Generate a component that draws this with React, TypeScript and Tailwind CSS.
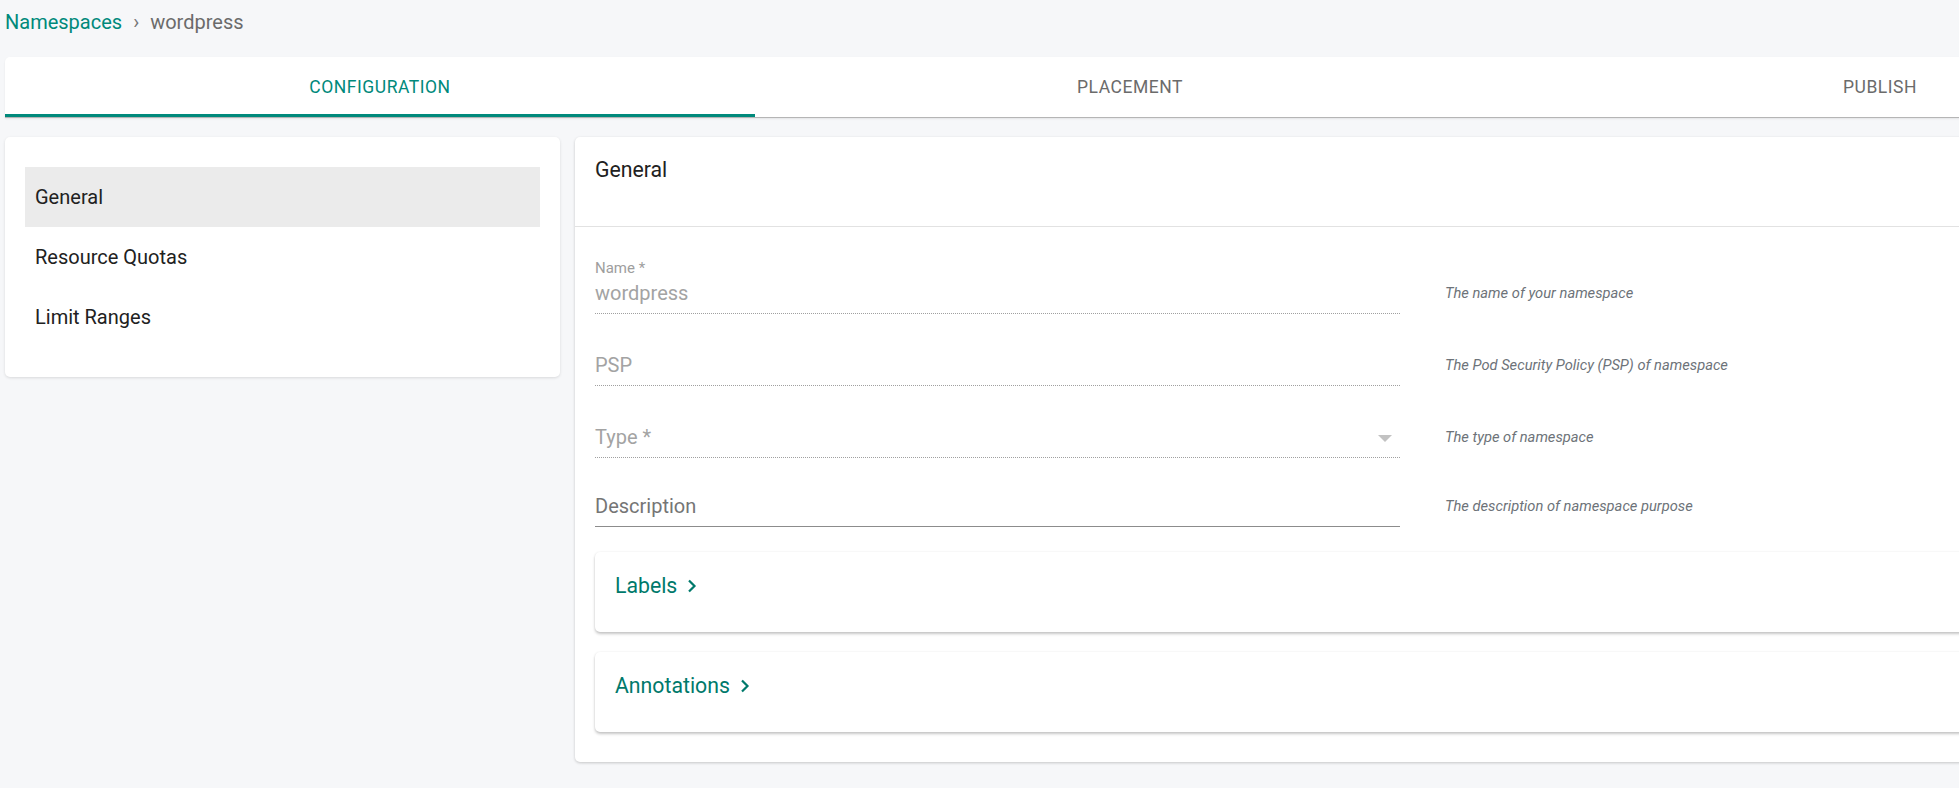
import React from 'react';

type Field = {
  label: string;
  value?: string;
  help: string;
  disabled: boolean;
  select?: boolean;
  gap: string;
};

const fields: Field[] = [
  { label: 'Name *', value: 'wordpress', help: 'The name of your namespace', disabled: true, gap: 'mt-[32px]' },
  { label: 'PSP', help: 'The Pod Security Policy (PSP) of namespace', disabled: true, gap: 'mt-[17px]' },
  { label: 'Type *', help: 'The type of namespace', disabled: true, select: true, gap: 'mt-[16.5px]' },
  { label: 'Description', help: 'The description of namespace purpose', disabled: false, gap: 'mt-[14.5px]' },
];

const menu = ['General', 'Resource Quotas', 'Limit Ranges'];

const tabs = ['Configuration', 'Placement', 'Publish'];

function FieldRow({ field }: { field: Field }) {
  const hasValue = !!field.value;
  return (
    <div className={`flex ${field.gap}`}>
      <div className="w-[805px] flex flex-col">
        <div className="h-[18px] text-[15px] leading-[18px] text-[#9e9e9e]">
          {hasValue ? field.label : ''}
        </div>
        <div className="mt-[4px] h-[24px] flex items-center justify-between">
          <span
            className={`text-[20px] leading-[24px] ${
              field.disabled ? 'text-[#a3a3a3]' : 'text-[#757575]'
            }`}
          >
            {hasValue ? field.value : field.label}
          </span>
          {field.select && (
            <svg width="14" height="8" viewBox="0 0 14 8" className="mr-[8px] mt-[4px]">
              <polygon points="0,0 14,0 7,7" fill="#c2c2c2" />
            </svg>
          )}
        </div>
        <div
          className={`mt-[8px] ${
            field.disabled
              ? 'border-b border-dotted border-[#a0a0a0]'
              : 'border-b-[1.5px] border-solid border-[#8c8c8c]'
          }`}
        />
      </div>
      <div className="ml-[45px] pt-[25px] text-[14.7px] leading-[18px] italic text-[#6d7379]">
        {field.help}
      </div>
    </div>
  );
}

function Expander({ title, className }: { title: string; className?: string }) {
  return (
    <div
      className={`h-[80px] rounded-[5px] bg-white px-5 pt-[22px] shadow-[0_2px_3px_rgba(0,0,0,0.22),0_0_2px_rgba(0,0,0,0.08)] ${className ?? ''}`}
    >
      <div className="flex items-center gap-[10px] text-[21.25px] leading-[24px] text-[#00796b]">
        <span>{title}</span>
        <svg width="10" height="14" viewBox="0 0 10 14" fill="none">
          <path d="M2 1.5 7.5 7 2 12.5" stroke="#00796b" strokeWidth="2.2" />
        </svg>
      </div>
    </div>
  );
}

export default function App() {
  return (
    <div className="w-screen h-screen overflow-hidden bg-[#f6f7f9] font-['Roboto',sans-serif]">
      <div className="w-[2260px] pl-[5px]">
        <div className="pt-[10px] flex items-center text-[20px] leading-[24px]">
          <span className="text-[#00897b]">Namespaces</span>
          <span className="mx-[11px] text-[#757575]">›</span>
          <span className="text-[#6b6b6b]">wordpress</span>
        </div>

        <div className="mt-[23px] flex h-[61px] w-[2250px] rounded-t-[5px] border-b border-[#b5b5b5] bg-white shadow-[0_1px_2px_rgba(0,0,0,0.08)]">
          {tabs.map((tab, i) => (
            <div key={tab} className="w-[750px] flex flex-col">
              <div
                className={`flex-1 flex items-center justify-center pt-[4px] text-[17.5px] uppercase tracking-[0.03em] ${
                  i === 0 ? 'text-[#00897b]' : 'text-[#6b6b6b]'
                }`}
              >
                {tab}
              </div>
              <div className={`h-[3px] ${i === 0 ? 'bg-[#00897b]' : ''}`} />
            </div>
          ))}
        </div>

        <div className="mt-[19px] flex gap-[15px] items-start">
          <div className="w-[555px] rounded-[5px] bg-white px-5 py-[30px] shadow-[0_1px_3px_rgba(0,0,0,0.12)]">
            {menu.map((item, i) => (
              <div
                key={item}
                className={`h-[60px] flex items-center pl-[10px] text-[20px] text-[#212121] ${
                  i === 0 ? 'bg-[#ebebeb]' : ''
                }`}
              >
                {item}
              </div>
            ))}
          </div>

          <div className="w-[1680px] rounded-[5px] bg-white shadow-[0_1px_3px_rgba(0,0,0,0.2)]">
            <div className="h-[90px] border-b border-[#e2e2e2] px-5 pt-[21px] text-[21.25px] leading-[24px] text-[#212121]">
              General
            </div>
            <div className="px-5 pb-[30px]">
              {fields.map((f) => (
                <FieldRow key={f.label} field={f} />
              ))}
              <Expander title="Labels" className="mt-[25px]" />
              <Expander title="Annotations" className="mt-[20px]" />
            </div>
          </div>
        </div>
      </div>
    </div>
  );
}
